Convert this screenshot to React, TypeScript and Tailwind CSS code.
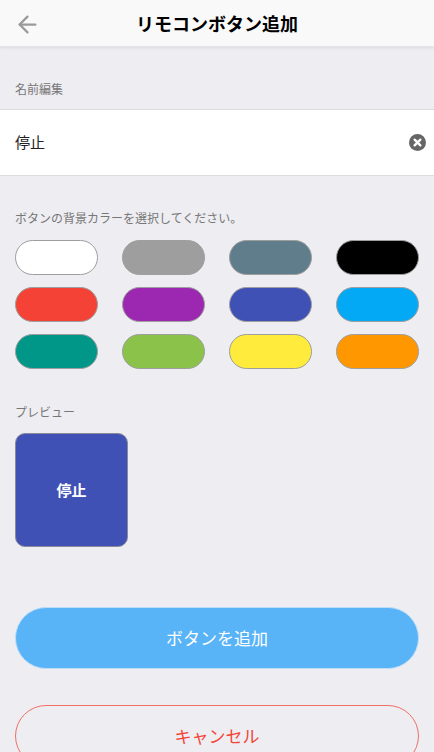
import { ArrowLeft } from "lucide-react"

const colors = [
  "#ffffff", "#9e9e9e", "#607d8b", "#000000",
  "#f44336", "#9c27b0", "#3f51b5", "#03a9f4",
  "#009688", "#8bc34a", "#ffeb3b", "#ff9800",
]

const font = { fontFamily: '"Noto Sans CJK JP", "Noto Sans", sans-serif' }

export default function App() {
  return (
    <div className="w-[434px] h-[752px] overflow-hidden bg-[#ededf2]" style={font}>
      {/* Header */}
      <header className="relative h-[47px] bg-[#f9f9f9] flex items-center justify-center shadow-[0_1px_3px_rgba(0,0,0,0.08)] border-b border-[#e4e4e8]">
        <ArrowLeft className="absolute left-[14px] top-[11px] text-[#9a9a9a]" size={27} strokeWidth={2} />
        <h1 className="text-[18px] font-bold text-black leading-none">リモコンボタン追加</h1>
      </header>

      <p className="px-[15px] pt-[34px] pb-[12px] text-[12px] leading-[16px] text-[#777]">名前編集</p>

      {/* Input */}
      <div className="h-[67px] bg-white border-y border-[#dcdce0] flex items-center justify-between pl-[15px] pr-[8px]">
        <span className="text-[15px] text-[#222]">停止</span>
        <svg width="17" height="17" viewBox="0 0 16 16">
          <circle cx="8" cy="8" r="8" fill="#666" />
          <path d="M5.3 5.3l5.4 5.4M10.7 5.3l-5.4 5.4" stroke="#fff" strokeWidth="2.2" strokeLinecap="round" />
        </svg>
      </div>

      <p className="px-[15px] pt-[34px] pb-[14px] text-[12px] leading-[16px] text-[#777]">ボタンの背景カラーを選択してください。</p>

      {/* Color grid */}
      <div className="grid grid-cols-4 gap-x-[24px] gap-y-[12px] px-[15px]">
        {colors.map((c) => (
          <div
            key={c}
            className="h-[35px] rounded-full border border-[#9e9e9e]"
            style={{ backgroundColor: c }}
          />
        ))}
      </div>

      <p className="px-[15px] pt-[35px] pb-[13px] text-[12px] leading-[16px] text-[#777]">プレビュー</p>

      {/* Preview */}
      <div className="px-[15px]">
        <div className="w-[113px] h-[114px] rounded-[10px] bg-[#3f51b5] border border-[#8a8a9a] flex items-center justify-center">
          <span className="text-white text-[15px] font-bold">停止</span>
        </div>
      </div>

      {/* Actions */}
      <div className="px-[15px] pt-[60px] flex flex-col gap-[36px]">
        <button className="h-[62px] w-full rounded-full bg-[#58b3f7] text-white text-[17px] border border-[#bcdcf7]">
          ボタンを追加
        </button>
        <button className="h-[62px] w-full rounded-full border border-[#f07066] text-[#f44336] text-[17px]">
          キャンセル
        </button>
      </div>
    </div>
  )
}
